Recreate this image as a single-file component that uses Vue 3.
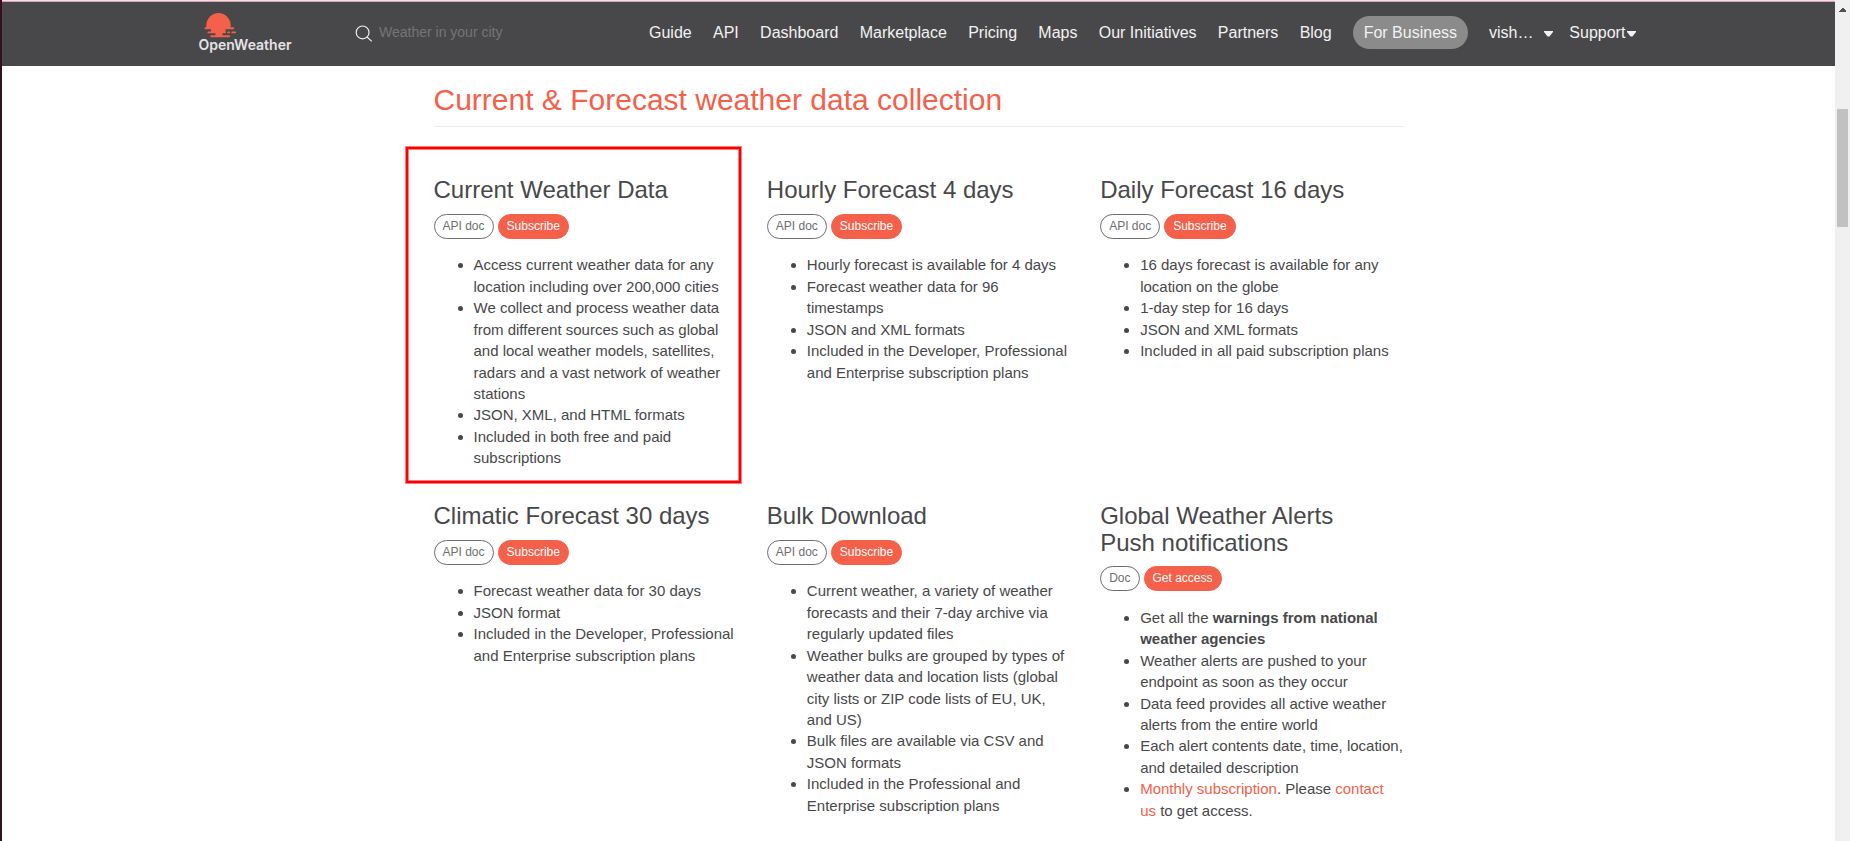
<script setup>
const nav = ['Guide', 'API', 'Dashboard', 'Marketplace', 'Pricing', 'Maps', 'Our Initiatives', 'Partners', 'Blog']

const t = (text) => [{ text }]

const cards = [
  {
    title: 'Current Weather Data', doc: 'API doc', action: 'Subscribe', marked: true,
    items: [
      t('Access current weather data for any location including over 200,000 cities'),
      t('We collect and process weather data from different sources such as global and local weather models, satellites, radars and a vast network of weather stations'),
      t('JSON, XML, and HTML formats'),
      t('Included in both free and paid subscriptions'),
    ],
  },
  {
    title: 'Hourly Forecast 4 days', doc: 'API doc', action: 'Subscribe',
    items: [
      t('Hourly forecast is available for 4 days'),
      t('Forecast weather data for 96 timestamps'),
      t('JSON and XML formats'),
      t('Included in the Developer, Professional and Enterprise subscription plans'),
    ],
  },
  {
    title: 'Daily Forecast 16 days', doc: 'API doc', action: 'Subscribe',
    items: [
      t('16 days forecast is available for any location on the globe'),
      t('1-day step for 16 days'),
      t('JSON and XML formats'),
      t('Included in all paid subscription plans'),
    ],
  },
  {
    title: 'Climatic Forecast 30 days', doc: 'API doc', action: 'Subscribe',
    items: [
      t('Forecast weather data for 30 days'),
      t('JSON format'),
      t('Included in the Developer, Professional and Enterprise subscription plans'),
    ],
  },
  {
    title: 'Bulk Download', doc: 'API doc', action: 'Subscribe',
    items: [
      t('Current weather, a variety of weather forecasts and their 7-day archive via regularly updated files'),
      t('Weather bulks are grouped by types of weather data and location lists (global city lists or ZIP code lists of EU, UK, and US)'),
      t('Bulk files are available via CSV and JSON formats'),
      t('Included in the Professional and Enterprise subscription plans'),
    ],
  },
  {
    title: 'Global Weather Alerts Push notifications', doc: 'Doc', action: 'Get access',
    items: [
      [{ text: 'Get all the ' }, { text: 'warnings from national weather agencies', kind: 'strong' }],
      t('Weather alerts are pushed to your endpoint as soon as they occur'),
      t('Data feed provides all active weather alerts from the entire world'),
      t('Each alert contents date, time, location, and detailed description'),
      [{ text: 'Monthly subscription', kind: 'link' }, { text: '. Please ' }, { text: 'contact us', kind: 'link' }, { text: ' to get access.' }],
    ],
  },
]
</script>

<template>
  <div class="window">
    <div class="view">
      <header class="topbar">
        <svg class="logo" width="100" height="46" viewBox="0 0 100 46">
          <g fill="#f4604a">
            <path d="M8.3 17.5 V14.4 A12.2 12.4 0 0 1 32.7 14.4 V17.5 Z" />
            <rect x="6.5" y="16.2" width="29.7" height="2" rx="1" />
            <rect x="13" y="18" width="14.5" height="3" />
            <rect x="9.5" y="20.4" width="12" height="1.9" rx="0.9" />
            <rect x="20" y="20.4" width="8" height="1.9" rx="0.9" />
            <rect x="29.2" y="20.4" width="2.8" height="1.9" rx="0.9" />
            <rect x="33.4" y="20.4" width="4.6" height="1.9" rx="0.9" />
            <rect x="17.5" y="21.5" width="7" height="4" />
            <rect x="12.2" y="24.3" width="20" height="2" rx="1" />
          </g>
          <text x="0.5" y="39.3" textLength="93" lengthAdjust="spacingAndGlyphs" class="wordmark">OpenWeather</text>
        </svg>
        <div class="search">
          <svg width="18" height="18" viewBox="0 0 18 18" fill="none" stroke="#eee" stroke-width="1.2">
            <circle cx="7.6" cy="7.4" r="6.4" />
            <path d="M12 12 L16.8 16.4" />
          </svg>
          <span>Weather in your city</span>
        </div>
        <nav class="nav">
          <a v-for="n in nav" :key="n">{{ n }}</a>
        </nav>
        <a class="business">For Business</a>
        <a class="user">vish…</a>
        <svg class="caret" width="9" height="6" viewBox="0 0 9 6"><path d="M0 0 H9 V1 L5.4 5.4 H3.6 L0 1 Z" fill="#f2f2f2" /></svg>
        <a class="support">Support</a>
        <svg class="caret" width="9" height="6" viewBox="0 0 9 6"><path d="M0 0 H9 V1 L5.4 5.4 H3.6 L0 1 Z" fill="#f2f2f2" /></svg>
      </header>

      <main class="content">
        <h2>Current &amp; Forecast weather data collection</h2>
        <div class="grid">
          <section v-for="c in cards" :key="c.title" class="card">
            <div v-if="c.marked" class="mark"></div>
            <h3>{{ c.title }}</h3>
            <div class="buttons">
              <a class="btn">{{ c.doc }}</a>
              <a class="btn solid">{{ c.action }}</a>
            </div>
            <ul>
              <li v-for="(parts, i) in c.items" :key="i"><span v-for="(p, j) in parts" :key="j" :class="p.kind">{{ p.text }}</span></li>
            </ul>
          </section>
        </div>
      </main>
    </div>
    <div class="scrollbar">
      <svg width="15" height="15" viewBox="0 0 15 15" shape-rendering="crispEdges"><path d="M4 10 V9 L7 6 H8 L11 9 V10 Z" fill="#505050" /></svg>
      <div class="thumb"></div>
    </div>
  </div>
</template>

<style>
body {
  background: #fff;
  overflow: hidden;
}
</style>

<style scoped>
.window {
  display: flex;
  box-sizing: border-box;
  height: 841px;
  border-left: 2px solid #35101f;
  overflow: hidden;
  font-family: "Liberation Sans", Arial, sans-serif;
  color: #48484a;
}
.view {
  flex: 1;
  box-sizing: border-box;
  border-top: 1px solid #fbd9e0;
  overflow: hidden;
}
.topbar {
  display: flex;
  box-sizing: border-box;
  height: 65px;
  padding-left: 196px;
  border-top: 1px solid #cfa9b3;
  background: #48484a;
  color: #f2f2f2;
  font-size: 16px;
  line-height: 22px;
}
.logo {
  margin-top: 9px;
  flex: none;
}
.wordmark {
  font: 600 14.5px Inter, sans-serif;
  fill: #e4e4e4;
}
.search {
  display: flex;
  width: 294px;
  margin-left: 57px;
  padding-top: 23px;
  box-sizing: border-box;
  flex: none;
}
.search svg {
  flex: none;
}
.search span {
  margin: -4px 0 0 6px;
  font-size: 14px;
  color: #757575;
  white-space: nowrap;
}
.nav {
  display: flex;
  gap: 21.3px;
  margin-top: 20px;
  white-space: nowrap;
}
.business {
  box-sizing: border-box;
  height: 33px;
  margin: 14px 0 0 21px;
  padding: 6px 11px 0;
  border-radius: 17px;
  background: #8b8b8b;
  white-space: nowrap;
}
.user {
  width: 55px;
  margin: 20px 0 0 21px;
}
.support {
  margin: 20px 0 0 16.3px;
}
.caret {
  margin-top: 29px;
  flex: none;
}
.support + .caret {
  margin-left: 1.5px;
}
.content {
  width: 970px;
  margin-left: 431.5px;
}
h2 {
  margin: 0;
  padding: 16px 0 8px;
  border-bottom: 1px solid #ececec;
  font-size: 30px;
  line-height: 36px;
  font-weight: 400;
  color: #f4604a;
}
.grid {
  display: grid;
  grid-template-columns: repeat(3, 303.33px);
  column-gap: 30px;
  grid-template-rows: 326px auto;
  margin-top: 50.3px;
}
.card {
  position: relative;
}
.mark {
  position: absolute;
  left: -27.5px;
  top: -30.3px;
  width: 331px;
  height: 332px;
  border: 2px solid #fe0000;
  box-shadow: 0 0 0 1px #ff7d7d, inset 0 0 0 1px #ff7d7d;
}
h3 {
  margin: 0;
  width: 280px;
  font-size: 24px;
  line-height: 26.4px;
  font-weight: 400;
}
.buttons {
  display: flex;
  gap: 4px;
  margin-top: 10.3px;
}
.btn {
  box-sizing: border-box;
  height: 25px;
  padding: 0 8px;
  border: 1px solid #6e6e70;
  border-radius: 13px;
  font-size: 12px;
  line-height: 22px;
  color: #6e6e70;
}
.solid {
  border-color: #f4604a;
  background: #f4604a;
  color: #fff;
}
ul {
  margin: 15.4px 0 0;
  padding-left: 40px;
  font-size: 15px;
  line-height: 21.43px;
}
.strong {
  font-weight: 700;
}
.link {
  color: #f4604a;
}
.scrollbar {
  width: 15px;
  box-sizing: border-box;
  padding-top: 2px;
  background: #f0f0f0;
}
.scrollbar svg {
  display: block;
}
.thumb {
  width: 11px;
  height: 118px;
  margin: 92px 0 0 2px;
  background: #c1c1c1;
}
</style>
